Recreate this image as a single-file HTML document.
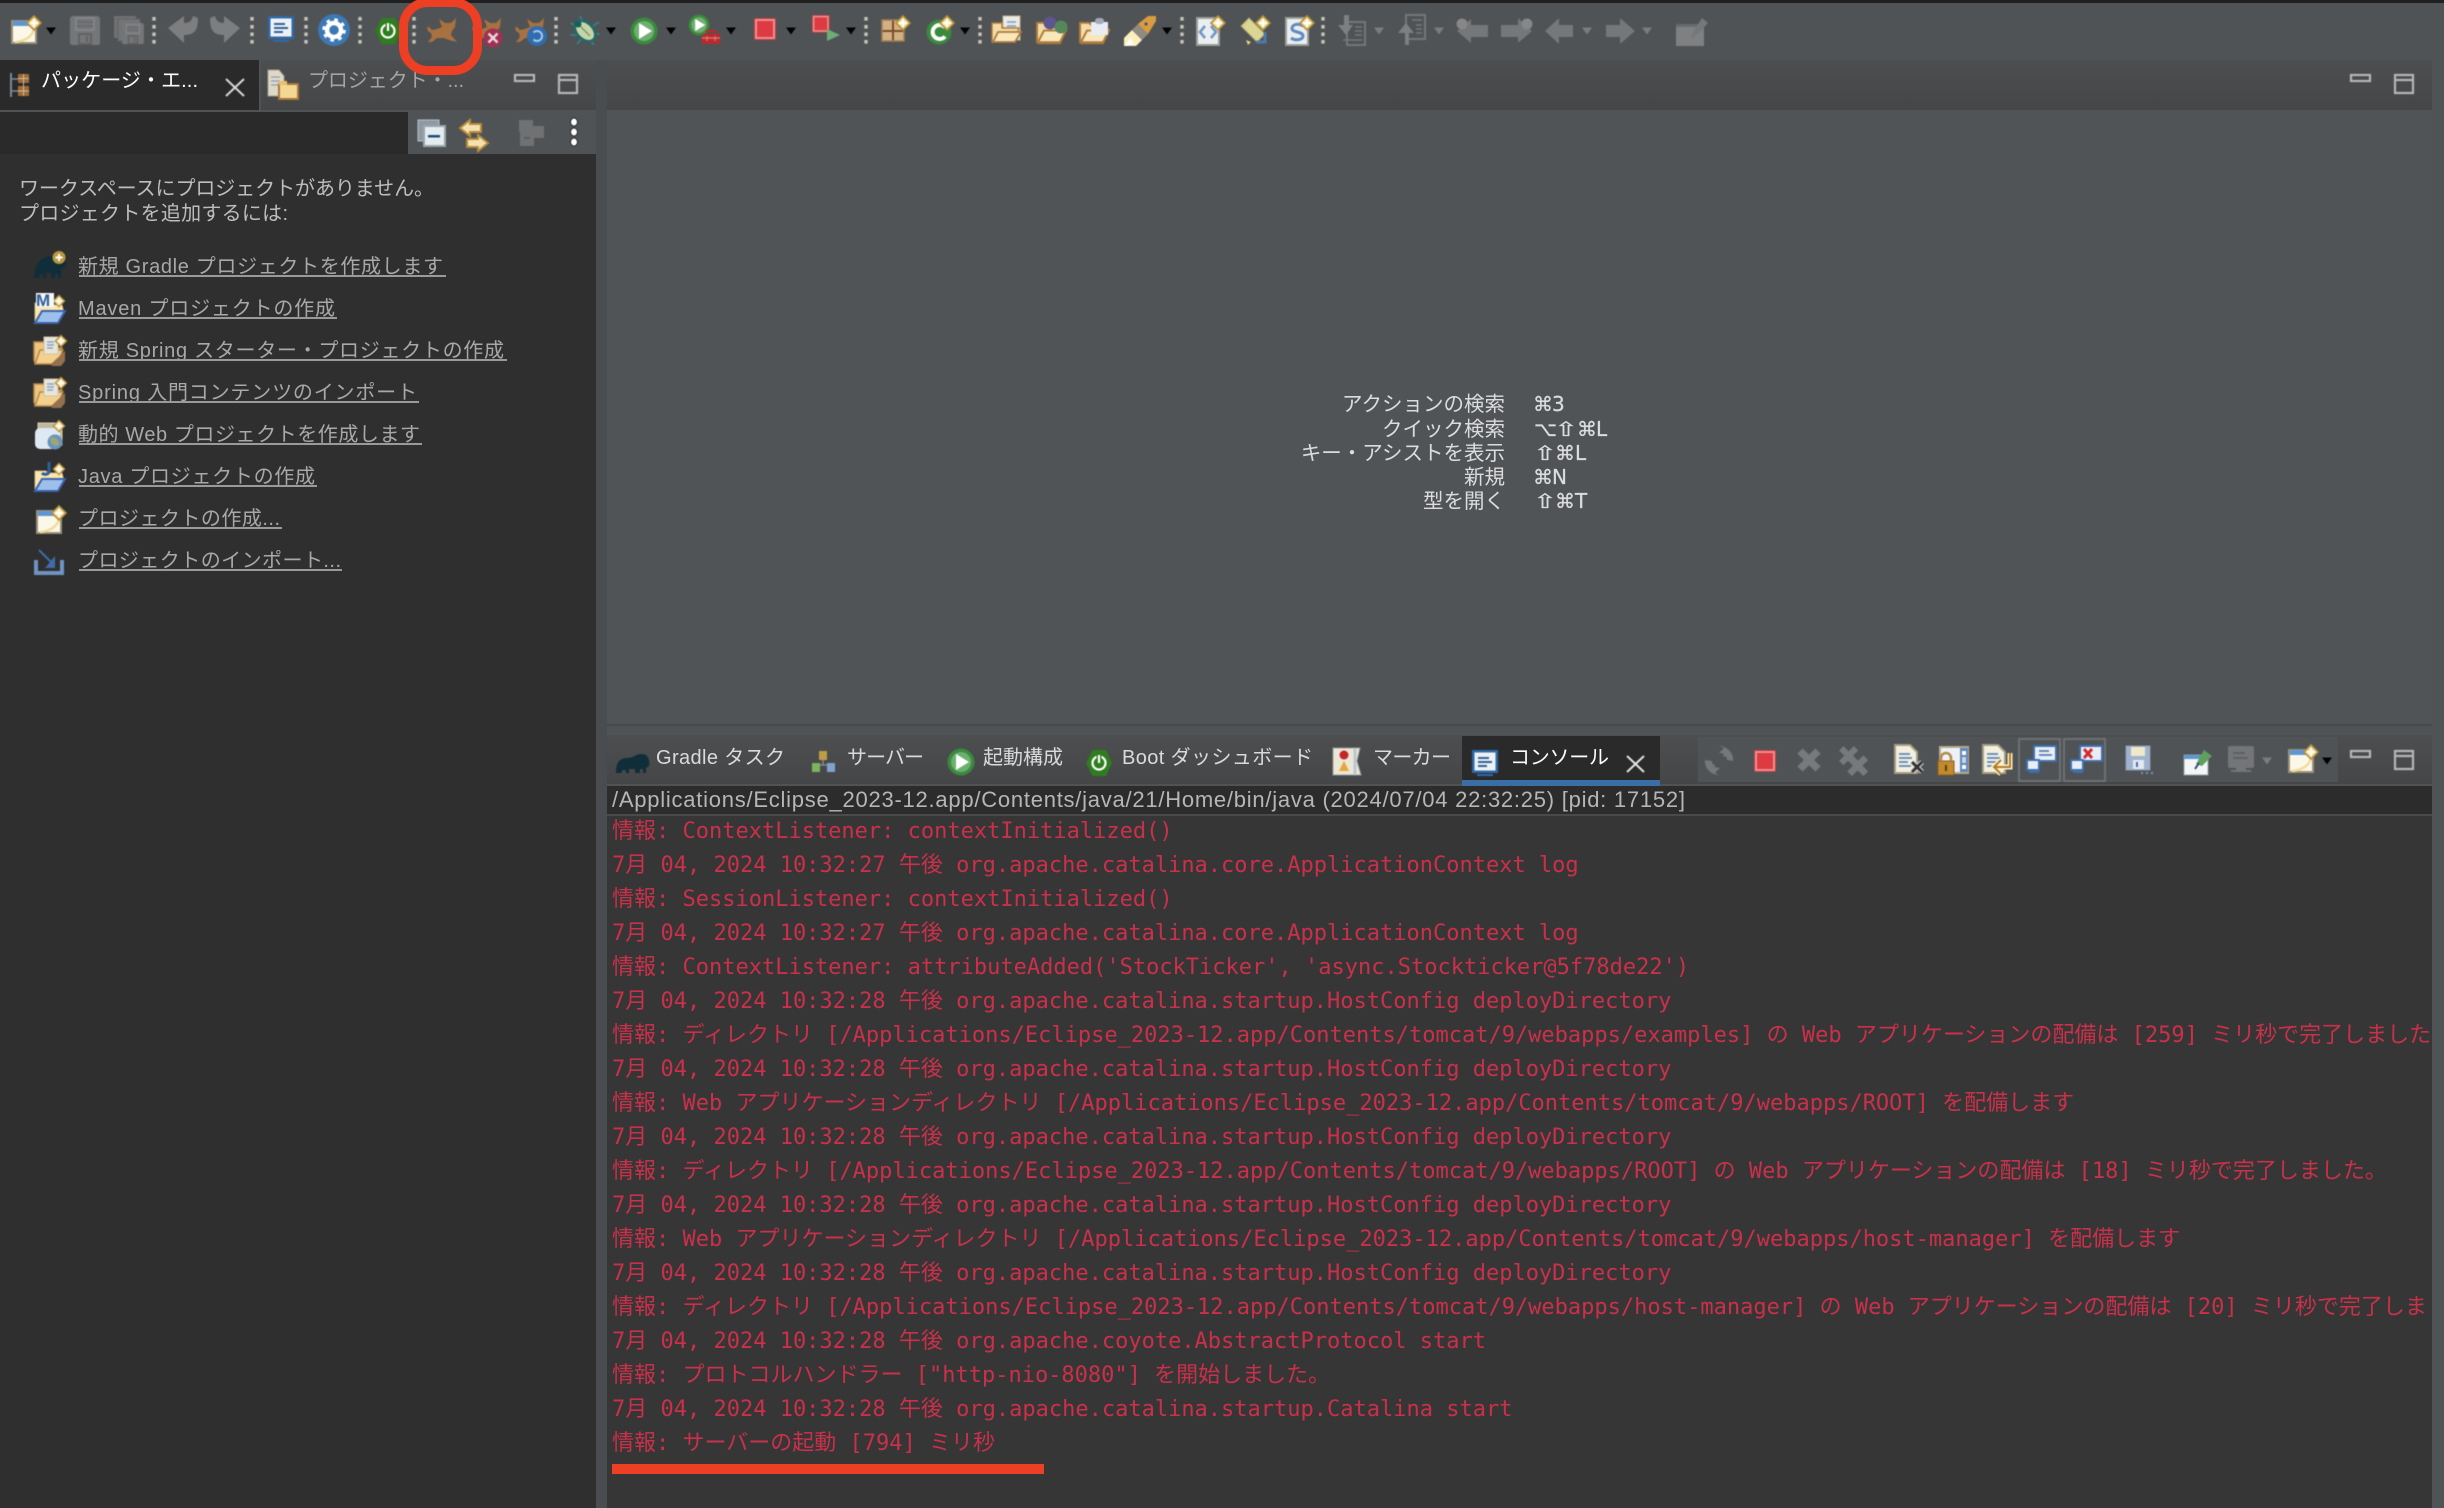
<!DOCTYPE html>
<html lang="ja"><head><meta charset="utf-8"><title>Eclipse</title>
<style>
html,body{margin:0;padding:0;background:#505355;width:2444px;height:1508px;overflow:hidden}
svg{display:block}
.ui{font-family:"Liberation Sans","Noto Sans CJK JP",sans-serif;font-size:20px}
.con{font-family:"DejaVu Sans Mono","Noto Sans CJK JP",monospace;font-size:22px;fill:#ca304a}
.link{fill:#a8a8a8}
.key{fill:#dcdcdc;text-anchor:end;font-size:20.5px}
.sc{fill:#dcdcdc;stroke:#dcdcdc;stroke-width:.25px;font-family:"DejaVu Sans","Liberation Sans",sans-serif;font-size:20px}
.ic{filter:blur(.5px)}
</style></head><body>
<svg xmlns="http://www.w3.org/2000/svg" width="2444" height="1508" viewBox="0 0 2444 1508">
<defs>
<linearGradient id="tb" x1="0" y1="0" x2="0" y2="1"><stop offset="0" stop-color="#4c4e50"/><stop offset="1" stop-color="#454647"/></linearGradient>
<g id="st"><path d="M0-7 7 0 0 7-7 0z" fill="#f4e2a6" stroke="#b48f3e" stroke-width="1.6"/><path d="M0-3.6V3.6M-3.6 0H3.6" stroke="#fff" stroke-width="2"/></g>
<path id="ar" d="M-5-3.5H5L0 3.5z" fill="#000"/>
<path id="arg" d="M-5-3.5H5L0 3.5z" fill="#7a7c7e"/>
<g id="sp" fill="#c6c4ba"><rect x="-1.7" y="17" width="3.4" height="3.6"/><rect x="-1.7" y="25" width="3.4" height="3.6"/><rect x="-1.7" y="32.500" width="3.4" height="3.6"/><rect x="-1.7" y="40" width="3.4" height="3.600"/></g>
<path id="cat" d="M12 1 18 5H24L29 0 28 9 25 13 24 17 30 24 22 22 17 20H10L5 24H1L5 19 4 15 1 13 0 9 2 9 5 12 10 11 15 9Z" fill="#a9713f"/>
<g id="win"><rect x="1" y="5" width="24" height="22" fill="#fbf8ea" stroke="#9c9078" stroke-width="2"/><rect x="2" y="5" width="22" height="5" fill="#5d97d3"/><path d="M23 12C22 20 15 25 4 26" fill="none" stroke="#efdc9a" stroke-width="2.500"/><use href="#st" x="23" y="7"/></g>
<g id="sv"><path d="M0 2 2 0H28L30 2V28L28 29H2L0 28Z" fill="#747678"/><rect x="6" y="2" width="18" height="12" fill="none" stroke="#85878a" stroke-width="1.600"/><path d="M7 6H23M7 10H23" stroke="#66686a" stroke-width="1.500"/><rect x="9" y="18" width="12" height="10" fill="none" stroke="#5f6163" stroke-width="2"/><rect x="16" y="20" width="2" height="6" fill="#5f6163"/></g>
<path id="und" d="M0 13 16 1V8C22 8 24 5 25 1L30 3C30 16 26 20 16 20V28Z" fill="#7c7e80"/>
<g id="scr"><rect x="0" y="0" width="26" height="23" fill="#2f6aa8"/><rect x="2.500" y="2.500" width="21" height="18" fill="#edf1f5"/><path d="M6 8H17M6 12H20M6 16H15" stroke="#2f5f95" stroke-width="2"/><rect x="5" y="24" width="16" height="2" fill="#2f6aa8"/></g>
<g id="boot"><path d="M6.500 0H20L26 13 20 26H6.500L0 13Z" fill="#2f7d1f"/><circle cx="13" cy="13" r="6.500" fill="none" stroke="#fff" stroke-width="2.200"/><path d="M13 5V13" stroke="#2f7d1f" stroke-width="5"/><path d="M13 5V13" stroke="#fff" stroke-width="2.200"/></g>
<g id="run"><circle r="13.500" fill="#3a8a3e"/><circle r="10" fill="#6fae71"/><path d="M-5-8 8 0-5 8Z" fill="#fff"/></g>
<g id="stp"><rect x="0" y="0" width="22" height="22" rx="1.500" fill="#c93a40"/><rect x="2" y="2" width="18" height="18" fill="#dd3a42" stroke="#eb8f90" stroke-width="2"/></g>
<g id="x"><path d="M4 4 22 22M22 4 4 22" stroke="#77797b" stroke-width="7.500" fill="none"/></g>
<g id="fold"><path d="M0 27V7H9L11 9H24V14H29L23 28H1Z" fill="#f3dca6" stroke="#ad7a3d" stroke-width="2"/><path d="M1 27 7 15H29L23 27Z" fill="#f9e7ba" stroke="#ad7a3d" stroke-width="2"/></g>
<g id="pg"><path d="M0 0H15L22 7V28H0Z" fill="#f3f0e0" stroke="#a59e85" stroke-width="2"/><path d="M4 9H15M4 13H17M4 17H13M4 21H16" stroke="#5b84b8" stroke-width="1.800"/></g>
<g id="fol2"><path d="M0 24V6H9L11 8H20L22 12H28L22 27H1Z" fill="#eec47e" stroke="#b58a4a" stroke-width="1.500"/><path d="M1 28 6 14H29L23 28Z" fill="#f4d08d" stroke="#b58a4a" stroke-width="1.500"/></g>
<g id="sprg"><use href="#fol2"/><rect x="10" y="1" width="14" height="17" fill="#e8e6dc" stroke="#cfc3a3"/><path d="M13 6H20M13 9H20M13 12H19" stroke="#8aa3c4" stroke-width="1.500"/><path d="M17 28 31 15V25L27 30H18Z" fill="#94704f"/><use href="#st" transform="translate(27 5) scale(.8)"/></g>
<g id="mvn"><path d="M1 30V10H12L14 12H28L30 20H27L27 18H8L1 30Z" fill="#fbe6ae" stroke="#d6c390" stroke-width=".8"/><path d="M1 30 8 18H31L24 30Z" fill="#9cc0ea" stroke="#3c62ae" stroke-width="2"/><use href="#st" transform="translate(25 8) scale(.8)"/></g>
</defs>

<!-- backgrounds -->
<rect width="2444" height="1508" fill="#505355"/>
<rect width="2444" height="3" fill="#202020"/>
<rect x="261" y="60" width="335" height="50" fill="url(#tb)"/>
<rect x="0" y="60" width="259" height="50" fill="#2a2a2a"/>
<rect x="0" y="112" width="408" height="42" fill="#2a2a2a"/>
<rect x="408" y="112" width="188" height="42" fill="#505355"/>
<rect x="0" y="154" width="596" height="1354" fill="#2f2f2f"/>
<rect x="596" y="60" width="11" height="1448" fill="#4a4d4f"/>
<rect x="607" y="60" width="1825" height="50" fill="url(#tb)"/>
<rect x="607" y="110" width="1825" height="615" fill="#515457"/>
<rect x="607" y="724" width="1825" height="2" fill="#474a4c"/>
<rect x="607" y="735" width="1825" height="49" fill="url(#tb)"/>
<rect x="607" y="786" width="1825" height="28" fill="#2c2c2c"/>
<rect x="607" y="814" width="1825" height="2" fill="#4a4a4a"/>
<rect x="607" y="816" width="1825" height="692" fill="#363636"/>
<rect x="1462" y="736" width="198" height="50" fill="#2a2a2a"/>
<rect x="1462" y="780" width="198" height="6" fill="#3a6ea5"/>
<rect x="1698" y="737" width="640" height="45" fill="#505355"/>

<!-- left text -->
<g class="ui">
<text x="41" y="87" fill="#fff" textLength="157">パッケージ・エ...</text>
<text x="308" y="87" fill="#a4a4a4" textLength="156">プロジェクト・...</text>
<text x="19" y="195" fill="#bdbdbd" textLength="415">ワークスペースにプロジェクトがありません。</text>
<text x="19" y="220" fill="#bdbdbd" textLength="269">プロジェクトを追加するには:</text>
<g class="link">
<text x="78" y="273" textLength="365">新規 Gradle プロジェクトを作成します</text>
<text x="78" y="315" textLength="257">Maven プロジェクトの作成</text>
<text x="78" y="357" textLength="426">新規 Spring スターター・プロジェクトの作成</text>
<text x="78" y="399" textLength="339">Spring 入門コンテンツのインポート</text>
<text x="78" y="441" textLength="342">動的 Web プロジェクトを作成します</text>
<text x="78" y="483" textLength="237">Java プロジェクトの作成</text>
<text x="78" y="525" textLength="202">プロジェクトの作成...</text>
<text x="78" y="567" textLength="263">プロジェクトのインポート...</text>
</g>
<g fill="#9a9a9a"><rect x="79" y="275" width="367" height="2"/><rect x="79" y="317" width="258" height="2"/><rect x="79" y="359" width="428" height="2"/><rect x="79" y="401" width="340" height="2"/><rect x="79" y="443" width="343" height="2"/><rect x="79" y="485" width="238" height="2"/><rect x="79" y="527" width="203" height="2"/><rect x="79" y="569" width="263" height="2"/></g>

<!-- editor hints -->
<g class="key">
<text x="1505" y="411">アクションの検索</text>
<text x="1505" y="436">クイック検索</text>
<text x="1505" y="460">キー・アシストを表示</text>
<text x="1505" y="484">新規</text>
<text x="1505" y="508">型を開く</text>
</g>
<text class="sc" x="1533 1552" y="411">⌘3</text>
<text class="sc" x="1534" y="436">⌥</text><text class="sc" transform="translate(1554 436) scale(1.45 1)">⇧</text><text class="sc" x="1577 1596" y="436">⌘L</text>
<text class="sc" transform="translate(1533 460) scale(1.45 1)">⇧</text><text class="sc" x="1555 1575" y="460">⌘L</text>
<text class="sc" x="1533 1552" y="484">⌘N</text>
<text class="sc" transform="translate(1533 508) scale(1.45 1)">⇧</text><text class="sc" x="1555 1575" y="508">⌘T</text>

<!-- bottom tabs -->
<text x="656" y="764" fill="#dadada" textLength="129">Gradle タスク</text>
<text x="847" y="764" fill="#dadada" textLength="77">サーバー</text>
<text x="983" y="764" fill="#dadada" textLength="80">起動構成</text>
<text x="1122" y="764" fill="#dadada" textLength="191">Boot ダッシュボード</text>
<text x="1373" y="764" fill="#dadada" textLength="78">マーカー</text>
<text x="1510" y="764" fill="#fff" textLength="99">コンソール</text>
<text x="612" y="807" fill="#b6b6b6" style="font-size:22px" textLength="1073">/Applications/Eclipse_2023-12.app/Contents/java/21/Home/bin/java (2024/07/04 22:32:25) [pid: 17152]</text>
</g>

<!-- console -->
<g class="con">
<text x="612" y="838">情報: ContextListener: contextInitialized()</text>
<text x="612" y="872">7月 04, 2024 10:32:27 午後 org.apache.catalina.core.ApplicationContext log</text>
<text x="612" y="906">情報: SessionListener: contextInitialized()</text>
<text x="612" y="940">7月 04, 2024 10:32:27 午後 org.apache.catalina.core.ApplicationContext log</text>
<text x="612" y="974">情報: ContextListener: attributeAdded('StockTicker', 'async.Stockticker@5f78de22')</text>
<text x="612" y="1008">7月 04, 2024 10:32:28 午後 org.apache.catalina.startup.HostConfig deployDirectory</text>
<text x="612" y="1042">情報: ディレクトリ [/Applications/Eclipse_2023-12.app/Contents/tomcat/9/webapps/examples] の Web アプリケーションの配備は [259] ミリ秒で完了しました</text>
<text x="612" y="1076">7月 04, 2024 10:32:28 午後 org.apache.catalina.startup.HostConfig deployDirectory</text>
<text x="612" y="1110">情報: Web アプリケーションディレクトリ [/Applications/Eclipse_2023-12.app/Contents/tomcat/9/webapps/ROOT] を配備します</text>
<text x="612" y="1144">7月 04, 2024 10:32:28 午後 org.apache.catalina.startup.HostConfig deployDirectory</text>
<text x="612" y="1178">情報: ディレクトリ [/Applications/Eclipse_2023-12.app/Contents/tomcat/9/webapps/ROOT] の Web アプリケーションの配備は [18] ミリ秒で完了しました。</text>
<text x="612" y="1212">7月 04, 2024 10:32:28 午後 org.apache.catalina.startup.HostConfig deployDirectory</text>
<text x="612" y="1246">情報: Web アプリケーションディレクトリ [/Applications/Eclipse_2023-12.app/Contents/tomcat/9/webapps/host-manager] を配備します</text>
<text x="612" y="1280">7月 04, 2024 10:32:28 午後 org.apache.catalina.startup.HostConfig deployDirectory</text>
<text x="612" y="1314">情報: ディレクトリ [/Applications/Eclipse_2023-12.app/Contents/tomcat/9/webapps/host-manager] の Web アプリケーションの配備は [20] ミリ秒で完了しました。</text>
<text x="612" y="1348">7月 04, 2024 10:32:28 午後 org.apache.coyote.AbstractProtocol start</text>
<text x="612" y="1382">情報: プロトコルハンドラー ["http-nio-8080"] を開始しました。</text>
<text x="612" y="1416">7月 04, 2024 10:32:28 午後 org.apache.catalina.startup.Catalina start</text>
<text x="612" y="1450">情報: サーバーの起動 [794] ミリ秒</text>
</g>
<rect x="2432" y="816" width="12" height="692" fill="#505355"/>

<!-- toolbar icons -->
<g class="ic">
<use href="#win" x="11" y="16"/><use href="#ar" x="51" y="31"/>
<use href="#sv" x="70" y="16"/>
<g transform="translate(114 16)"><rect width="22" height="22" fill="#6e7072"/><rect x="4" y="3" width="22" height="22" fill="#727476" stroke="#5f6163"/><g transform="translate(8 7) scale(.73)"><use href="#sv"/></g></g>
<use href="#und" x="168" y="15"/><use href="#und" transform="translate(240 15) scale(-1 1)"/>
<use href="#scr" x="268" y="16"/>
<g transform="translate(334 30)"><circle r="16" fill="#3c78b4"/><circle r="7" fill="none" stroke="#fff" stroke-width="4.500"/><circle r="10" fill="none" stroke="#fff" stroke-width="3.500" stroke-dasharray="3.500 4.350"/></g>
<use href="#boot" x="375" y="18"/>
<use href="#cat" x="427" y="18"/>
<use href="#cat" x="472" y="18"/><circle cx="493" cy="38" r="9.500" fill="#a12f52"/><path d="M488.500 33.500 497.500 42.500M497.500 33.500 488.500 42.500" stroke="#e9d8dc" stroke-width="2.500"/>
<use href="#cat" x="515" y="18"/><circle cx="537" cy="36" r="10" fill="#2f6db0"/><path d="M533.500 32.500A5 5 0 1 1 533.500 39.500" fill="none" stroke="#a9c7e6" stroke-width="2"/>
<g transform="translate(585 31)"><path d="M-14-8-8-4M14-9 8-5M-15 4H-8M15 3H9M-8 13-4 8M9 14 5 9M-5-15-2-9" stroke="#2f8a85" stroke-width="1.600" fill="none"/><ellipse rx="8" ry="12" transform="rotate(-45)" fill="#c7d5a6" stroke="#1f6a6a" stroke-width="2.500"/><path d="M-5-5 5 5" stroke="#7f9a6d" stroke-width="1.500"/><circle cx="-7" cy="-7" r="3.500" fill="#18605f"/></g>
<use href="#ar" x="611" y="31"/>
<use href="#run" x="644" y="31"/><use href="#ar" x="671" y="31"/>
<g transform="translate(699 25) scale(.77)"><use href="#run"/></g>
<g><rect x="702" y="34" width="18" height="10" fill="#b82a2c"/><path d="M707 34V31H715V34" fill="none" stroke="#b82a2c" stroke-width="2"/><path d="M702 38H720M707 36V41M715 36V41" stroke="#e6787a" stroke-width="1.200"/></g>
<use href="#ar" x="731" y="31"/>
<use href="#stp" x="754" y="18"/><use href="#ar" x="791" y="31"/>
<g transform="translate(812 15) scale(.8)"><use href="#stp"/></g><path d="M827 29 840 35 827 41Z" fill="#6ead75"/><use href="#ar" x="851" y="31"/>
<g transform="translate(882 20)"><rect width="22" height="21" fill="#d1b084"/><path d="M-1 11H23M11-1V23" stroke="#7a4d2a" stroke-width="2"/><path d="M0 0H22V21H0Z" fill="none" stroke="#a17e55" stroke-width="1.500"/></g><use href="#st" x="903" y="23"/>
<circle cx="939" cy="32" r="12.500" fill="#3a8a3e"/><path d="M945 27.500A7 7 0 1 0 945 36.500" fill="none" stroke="#fff" stroke-width="4"/><use href="#st" x="947" y="23"/><use href="#ar" x="965" y="31"/>
<g transform="translate(992 15)"><rect x="11" y="1" width="17" height="24" fill="#e8ebe8" stroke="#c4b68e"/><path d="M15 7H24M15 11H24M15 15H24" stroke="#7e9bbd" stroke-width="1.600"/><path d="M0 27V8H10V13H27L22 27Z" fill="#f3dca6" stroke="#ad7a3d" stroke-width="1.400"/><path d="M1 27 6 17H29L23 27Z" fill="#fae8bb" stroke="#ad7a3d" stroke-width="1.800"/></g>
<g transform="translate(1037 16)"><use href="#fold" transform="scale(1 .97)"/><circle cx="13" cy="7" r="6.500" fill="#5d568e"/><circle cx="24" cy="11" r="6.500" fill="#54885a"/></g>
<g transform="translate(1080 16)"><use href="#fold" transform="scale(1 .97)"/><rect x="11" y="6" width="17" height="13" fill="#e8edf3"/><rect x="15" y="2" width="9" height="6" rx="3" fill="#9fa9b8"/></g>
<g transform="translate(1124 16)"><path d="M0 30V22L8 14 18 24 12 30Z" fill="#fbf0bd"/><path d="M8 14 14 8 24 18 18 24Z" fill="#8e8b80"/><path d="M14 8 24 0H32V5L24 18Z" fill="#d99c3f"/><circle cx="22" cy="8" r="1.500" fill="#2d4f7f"/><path d="M1 30 6 22 10 28" fill="#fff"/></g>
<use href="#ar" x="1167" y="31"/>
<g transform="translate(1197 18)"><rect width="22" height="27" fill="#eaeef0" stroke="#9a9f98" stroke-width="2"/><path d="M8 8 3 14 8 20M14 8 19 14 14 20" fill="none" stroke="#6f97c4" stroke-width="2.600"/></g><use href="#st" x="1218" y="23"/>
<g transform="translate(1241 18)"><path d="M0 8 8 0 24 16 16 24Z" fill="#dcd694" stroke="#a8a46a"/><path d="M5 22 10 24 7 27Z" fill="#e0d87a"/><path d="M24 14V24H15" fill="none" stroke="#4f78ae" stroke-width="3"/></g><use href="#st" x="1263" y="23"/>
<g transform="translate(1286 18)"><rect width="22" height="27" fill="#eaeef0" stroke="#9a9f98" stroke-width="2"/><path d="M17 8C13 5 6 6 6 10.500 6 15 17 13 17 18 17 22 9 23 5 20" fill="none" stroke="#5f8bbd" stroke-width="3"/></g><use href="#st" x="1307" y="23"/>
<g fill="#757779" stroke="#757779">
<g transform="translate(1338 15)"><rect x="9" y="7" width="18" height="23" fill="none" stroke-width="2"/><path d="M11 0V10H15L8 20 0 10H6V0Z" fill="#7d7f81" stroke="none"/><path d="M17 12H24M17 16H24M17 20H24M5 25H24" stroke-width="1.600"/></g>
<g transform="translate(1398 15)"><rect x="8" y="0" width="19" height="24" fill="none" stroke-width="2"/><path d="M7 30V18H0L8 8 16 18H11V30Z" fill="#7d7f81" stroke="none"/><path d="M14 5H24M18 10H24M18 14H24M18 18H24" stroke-width="1.600"/></g>
<g stroke="none">
<path d="M1457 31 1471 19V25H1488V37H1471V43Z"/><path d="M1501 25H1518V18L1532 31 1518 43V37H1501Z"/>
<path d="M1545 31 1559 18V25H1573V37H1559V44Z"/><path d="M1606 25H1620V18L1635 31 1620 44V37H1606Z"/>
</g>
<circle cx="1462" cy="24" r="5.500" stroke="none" fill="#858789"/><circle cx="1527" cy="24" r="5.500" stroke="none" fill="#858789"/>
<g transform="translate(1676 18)" stroke="none"><rect y="6" width="28" height="22" fill="#7e8082"/><rect y="6" width="28" height="3" fill="#686a6c"/><path d="M17 14 26 0 32 5 22 16ZM17 14 15 22 21 16Z"/></g>
</g>
<use href="#sp" x="154"/><use href="#sp" x="252"/><use href="#sp" x="306"/><use href="#sp" x="360"/><use href="#sp" x="414"/><use href="#sp" x="556"/><use href="#sp" x="866"/><use href="#sp" x="980"/><use href="#sp" x="1182"/><use href="#sp" x="1323"/>
<use href="#arg" x="1379" y="31"/><use href="#arg" x="1439" y="31"/><use href="#arg" x="1587" y="31"/><use href="#arg" x="1647" y="31"/>

<!-- left tabs -->
<rect x="10" y="73" width="2" height="24" fill="#7b8a99"/><path d="M10 79H18M10 91H18" stroke="#7b8a99" stroke-width="1.500"/>
<rect x="18" y="74" width="11" height="9" fill="#9c6c3c"/><rect x="18" y="86" width="11" height="10" fill="#9c6c3c"/><path d="M23.500 74V96M18 78.500H29M18 91H29" stroke="#d9b98a" stroke-width="1"/>
<path d="M226 79 244 96M244 79 226 96" stroke="#d8d8d8" stroke-width="2" fill="none"/>
<g transform="translate(268 70)"><path d="M0 0H11L16 6V26H0Z" fill="#ddd9c6" stroke="#a7a08a"/><path d="M3 7H12M3 11H12M3 15H10" stroke="#7d93b5"/><rect x="11" y="14" width="19" height="15" fill="#f3d893" stroke="#a8763a" stroke-width="2"/><rect x="11" y="11" width="8" height="4" fill="#e8c070"/></g>
<!-- view toolbar -->
<g transform="translate(418 120)"><rect width="21" height="21" fill="#8e99a4" stroke="#b7c1ca"/><rect x="6" y="6" width="21" height="20" fill="#e3ecef" stroke="#9aa4ad" stroke-width="2"/><rect x="10" y="15" width="12" height="2.500" fill="#1c4a78"/></g>
<g transform="translate(459 118)"><path d="M1 10 11 2V6H22V14H11V18Z" fill="#f3e2b0" stroke="#b78a3a" stroke-width="2"/><path d="M29 25 19 17V21H8V29H19V33Z" fill="#f3e2b0" stroke="#b78a3a" stroke-width="2"/></g>
<g transform="translate(518 120)" fill="#6f7173"><rect x="1" y="0" width="14" height="12"/><rect x="14" y="6" width="12" height="12"/><rect x="2" y="12" width="14" height="14"/><path d="M6 18H12" stroke="#5a5c5e" stroke-width="2"/></g>
<g fill="#fff" stroke="#222" stroke-width="1"><ellipse cx="574" cy="122" rx="3.500" ry="4"/><ellipse cx="574" cy="132" rx="3.500" ry="4"/><ellipse cx="574" cy="142" rx="3.500" ry="4"/></g>
<!-- min/max -->
<g fill="none" stroke="#b4b6b8" stroke-width="2.200">
<rect x="515" y="75" width="19" height="6"/><path d="M559 75H577V93H559ZM559 80H577"/>
<rect x="2351" y="75" width="19" height="6"/><path d="M2395 75H2413V93H2395ZM2395 80H2413"/>
<rect x="2351" y="751" width="19" height="6"/><path d="M2395 751H2413V769H2395ZM2395 756H2413"/>
</g>

<!-- list icons -->
<g transform="translate(34 254)"><path d="M0 24C0 10 8 2 17 2 22 2 24 0 29 1 33 3 32 10 32 12 30 14 28 13 27 16L27 24H24V20H21V24H17V19H12V24H9V20H6V24Z" fill="#0f2e3a"/><circle cx="25" cy="3.500" r="6.500" fill="#b9973f"/><path d="M25 0V7M21.500 3.500H28.500" stroke="#fff" stroke-width="2"/></g>
<g transform="translate(34 293)"><use href="#mvn"/><rect x="2" y="0" width="18" height="14" fill="#f7f7f7"/><text x="2" y="13" font-family="Liberation Sans" font-weight="bold" font-size="17" fill="#2d5f99">M</text></g>
<use href="#sprg" x="34" y="336"/><use href="#sprg" x="34" y="378"/>
<g transform="translate(35 420)"><rect x="3" y="3" width="24" height="22" fill="#bfb89f" stroke="#d9cfa8"/><rect x="0" y="8" width="25" height="21" rx="5" fill="#dfe9f3"/><circle cx="20" cy="22" r="7.500" fill="#6a94bd"/><path d="M15 18C19 16 25 19 24 25 20 27 16 25 15 18Z" fill="#9aa878"/><use href="#st" transform="translate(24 6) scale(.8)"/></g>
<g transform="translate(34 462)"><use href="#mvn" y="-1"/><path d="M15 0V9C15 13 10 13 8 11" fill="none" stroke="#2d5f99" stroke-width="3"/></g>
<use href="#win" x="36" y="506"/>
<g transform="translate(34 550)"><path d="M2 10V23H28V10" fill="none" stroke="#7094c2" stroke-width="4"/><path d="M5 0 19 14" stroke="#3f6ca8" stroke-width="2"/><path d="M21 6V18H11Z" fill="#3f6ca8"/></g>

<!-- bottom tab icons -->
<path d="M616 773C616 763 619 758 628 758 633 758 636 754 642 754 648 754 650 760 649 766L646 768V773H643V769H640V773H635V769H629V773H626V770H622V773Z" fill="#0f2e3a"/>
<g transform="translate(810 750)"><path d="M13 10V15M6 15H20" stroke="#888" stroke-width="1.500"/><rect x="9" y="1" width="8" height="9" fill="#bd9c45"/><rect x="2" y="13" width="8" height="9" fill="#7fb35c"/><rect x="17" y="13" width="8" height="9" fill="#7fa3cc"/></g>
<use href="#run" x="961" y="762"/>
<use href="#boot" x="1086" y="750"/>
<g transform="translate(1333 747)"><path d="M0 1H27L24 14 28 28H0Z" fill="#ece7d4" stroke="#999"/><path d="M22 1V28" stroke="#b9c6d6" stroke-width="3"/><circle cx="11" cy="8" r="4.500" fill="#c5262c"/><path d="M11 14 16 24H6Z" fill="#e5a63e"/></g>
<use href="#scr" x="1472" y="750"/>
<path d="M1627 756 1644 772M1644 756 1627 772" stroke="#e6e6e6" stroke-width="2" fill="none"/>

<!-- console toolbar -->
<g transform="translate(1705 746)" fill="#75777a"><path d="M14 0C22 0 29 7 28 15L22 14C22 10 19 7 14 7L19 2ZM14 29C6 29-1 22 0 14L7 15C7 19 10 22 15 22L10 27Z"/><path d="M20 4 26 9 18 11ZM8 25 2 20 10 18Z"/></g>
<use href="#stp" x="1754" y="750"/>
<use href="#x" x="1796" y="747"/>
<use href="#x" transform="translate(1838 745) scale(.82)"/><use href="#x" transform="translate(1846 754) scale(.9)"/>
<use href="#pg" x="1895" y="745"/><path d="M1912 762 1922 772M1922 762 1912 772" stroke="#ddd" stroke-width="5"/><path d="M1912 762 1922 772M1922 762 1912 772" stroke="#333" stroke-width="3"/>
<g transform="translate(1940 747)"><rect width="28" height="26" fill="#eef2f6" stroke="#b8ab8c" stroke-width="2"/><rect x="20" y="1" width="8" height="24" fill="#5f87b9"/><rect x="22" y="4" width="4" height="4" fill="#fff"/><rect x="22" y="18" width="4" height="4" fill="#fff"/><rect x="22" y="10" width="4" height="6" fill="#c9d6e6"/><rect x="-2" y="14" width="16" height="14" fill="#c08a2e" stroke="#8c5d1c"/><path d="M1 14V11A5 5 0 0 1 11 11V14" fill="none" stroke="#b08a4a" stroke-width="2.500"/><rect x="5" y="18" width="2" height="6" fill="#5a3a10"/></g>
<use href="#pg" x="1983" y="745"/><path d="M2010 753V767H1995M2001 760 1994 767 2001 774" fill="none" stroke="#fff3cc" stroke-width="5"/><path d="M2010 753V767H1995M2001 760 1994 767 2001 774" fill="none" stroke="#b07a2a" stroke-width="2"/>
<rect x="2019" y="739" width="41" height="42" fill="none" stroke="#6e7173" stroke-width="2"/>
<rect x="2064" y="739" width="41" height="42" fill="none" stroke="#6e7173" stroke-width="2"/>
<g><rect x="2034" y="746" width="22" height="15" fill="#e9eef4" stroke="#3f6fae" stroke-width="2"/><path d="M2039 751H2049M2039 755H2052" stroke="#3f6fae" stroke-width="1.500"/><rect x="2027" y="760" width="12" height="10" fill="#e9eef4" stroke="#3f6fae" stroke-width="2"/><rect x="2029" y="771" width="10" height="2" fill="#3f6fae"/></g>
<g><rect x="2080" y="746" width="22" height="15" fill="#e9eef4" stroke="#3f6fae" stroke-width="2"/><path d="M2084 749 2092 758M2092 749 2084 758" stroke="#d3282e" stroke-width="3"/><rect x="2071" y="760" width="12" height="10" fill="#e9eef4" stroke="#3f6fae" stroke-width="2"/><rect x="2073" y="771" width="10" height="2" fill="#3f6fae"/></g>
<g transform="translate(2126 746)"><rect width="24" height="24" fill="#9fb3d0" stroke="#8d9ab0"/><rect x="5" y="1" width="14" height="9" fill="#f0e8c8"/><rect x="7" y="14" width="11" height="9" fill="#e4e9f0"/><rect x="10" y="16" width="2" height="5" fill="#3f6fae"/><path d="M15 27H17M20 27H22M25 27H27" stroke="#7d93b5" stroke-width="2"/></g>
<g transform="translate(2184 748)"><rect y="7" width="24" height="20" fill="#f3f5f6" stroke="#9aa09a"/><rect y="7" width="24" height="4" fill="#5d97d3"/><path d="M12 16 20 2 28 8 18 18Z" fill="#5fa05f"/><path d="M15 15 11 21" stroke="#334a7a" stroke-width="2"/></g>
<g transform="translate(2228 746)"><rect width="26" height="22" rx="2" fill="#737578"/><path d="M5 7H17M5 12H20" stroke="#5e6062" stroke-width="2"/><rect x="8" y="22" width="10" height="2" fill="#737578"/><rect x="3" y="24" width="20" height="2" fill="#737578"/></g>
<use href="#arg" x="2267" y="761"/>
<use href="#win" x="2288" y="745"/><use href="#ar" x="2327" y="761"/>
</g>

<!-- annotations -->
<rect x="612" y="1464" width="432" height="10" fill="#ec3f23"/>
<rect x="403.500" y="2.500" width="74" height="68" rx="24" fill="none" stroke="#ec3f23" stroke-width="9"/>
</svg>
</body></html>
